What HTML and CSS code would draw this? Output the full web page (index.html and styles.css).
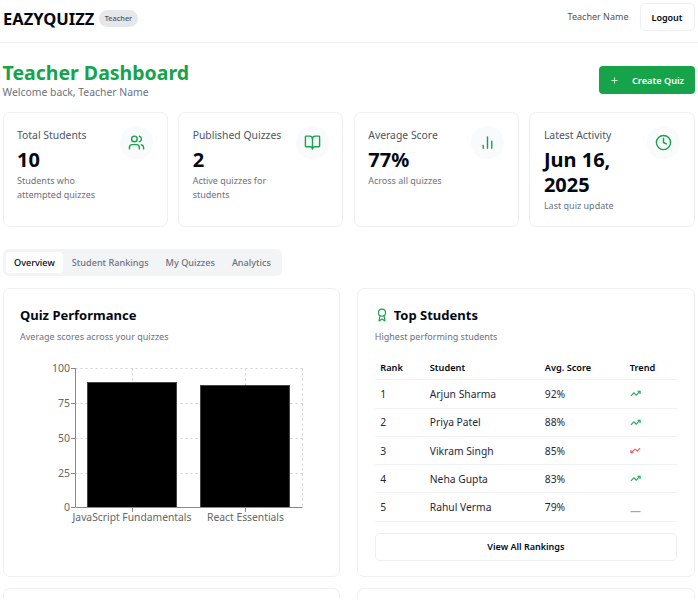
FILE: index.html
```html
<!DOCTYPE html>
<html lang="en">

<head>
    <meta charset="UTF-8">
    <meta name="viewport" content="width=device-width, initial-scale=1.0">
    <title>Teacher Dashboard</title>
    <link rel="stylesheet" href="styles.css">
</head>

<body>
    <header class="topbar">
        <div class="brand">
            <span class="logo">EAZYQUIZZ</span>
            <span class="role-badge">Teacher</span>
        </div>
        <div class="user-box">
            <span class="user-name">Teacher Name</span>
            <button class="btn-outline logout-btn">Logout</button>
        </div>
    </header>

    <main class="content">
        <div class="page-head">
            <div>
                <h1>Teacher Dashboard</h1>
                <p class="welcome">Welcome back, Teacher Name</p>
            </div>
            <button class="create-btn">
                <svg class="icon-plus" viewBox="0 0 24 24"><path d="M5 12h14M12 5v14" /></svg>
                Create Quiz
            </button>
        </div>

        <section class="stats">
            <div class="stat-card">
                <div class="stat-text">
                    <div class="stat-label">Total Students</div>
                    <div class="stat-value">10</div>
                    <div class="stat-note">Students who attempted quizzes</div>
                </div>
                <div class="stat-icon">
                    <svg viewBox="0 0 24 24"><path d="M16 21v-2a4 4 0 0 0-4-4H6a4 4 0 0 0-4 4v2" /><circle cx="9" cy="7" r="4" /><path d="M22 21v-2a4 4 0 0 0-3-3.87" /><path d="M16 3.13a4 4 0 0 1 0 7.75" /></svg>
                </div>
            </div>
            <div class="stat-card">
                <div class="stat-text">
                    <div class="stat-label">Published Quizzes</div>
                    <div class="stat-value">2</div>
                    <div class="stat-note">Active quizzes for students</div>
                </div>
                <div class="stat-icon">
                    <svg viewBox="0 0 24 24"><path d="M12 7v14" /><path d="M3 18a1 1 0 0 1-1-1V4a1 1 0 0 1 1-1h5a4 4 0 0 1 4 4 4 4 0 0 1 4-4h5a1 1 0 0 1 1 1v13a1 1 0 0 1-1 1h-6a3 3 0 0 0-3 3 3 3 0 0 0-3-3z" /></svg>
                </div>
            </div>
            <div class="stat-card">
                <div class="stat-text">
                    <div class="stat-label">Average Score</div>
                    <div class="stat-value">77%</div>
                    <div class="stat-note">Across all quizzes</div>
                </div>
                <div class="stat-icon">
                    <svg viewBox="0 0 24 24"><path d="M12 20V4" /><path d="M18 20v-10" /><path d="M6 20v-4" /></svg>
                </div>
            </div>
            <div class="stat-card">
                <div class="stat-text">
                    <div class="stat-label">Latest Activity</div>
                    <div class="stat-value">Jun 16, 2025</div>
                    <div class="stat-note">Last quiz update</div>
                </div>
                <div class="stat-icon">
                    <svg viewBox="0 0 24 24"><circle cx="12" cy="12" r="10" /><path d="M12 6v6l4 2" /></svg>
                </div>
            </div>
        </section>

        <nav class="tabs">
            <span class="tab active">Overview</span>
            <span class="tab">Student Rankings</span>
            <span class="tab">My Quizzes</span>
            <span class="tab">Analytics</span>
        </nav>

        <section class="panels">
            <div class="panel">
                <h2>Quiz Performance</h2>
                <p class="panel-sub">Average scores across your quizzes</p>
                <svg class="chart" width="300" height="170" viewBox="0 0 300 170">
                    <g class="grid">
                        <path d="M55.5 12.5H282.5M55.5 47.5H282.5M55.5 82.5H282.5M55.5 117.5H282.5" />
                        <path d="M112.5 12.5V151M225.5 12.5V151M282.5 12.5V151" />
                    </g>
                    <rect class="bar" x="67.5" y="26.5" width="89" height="125" />
                    <rect class="bar" x="180.5" y="29.5" width="89" height="122" />
                    <g class="axis">
                        <path d="M55.5 12V151.5H282.5" />
                        <path d="M51 12.5H55M51 47.5H55M51 82.5H55M51 117.5H55M51 151.5H55M112.5 152V156M225.5 152V156" />
                    </g>
                    <g class="y-labels">
                        <text x="50" y="16">100</text>
                        <text x="50" y="51">75</text>
                        <text x="50" y="86">50</text>
                        <text x="50" y="121">25</text>
                        <text x="50" y="155">0</text>
                    </g>
                    <g class="x-labels">
                        <text x="112" y="165">JavaScript Fundamentals</text>
                        <text x="225.5" y="165">React Essentials</text>
                    </g>
                </svg>
            </div>

            <div class="panel">
                <h2 class="title-icon">
                    <svg viewBox="0 0 24 24"><path d="m15.477 12.89 1.515 8.526a.5.5 0 0 1-.81.47l-3.58-2.687a1 1 0 0 0-1.197 0l-3.586 2.686a.5.5 0 0 1-.81-.469l1.514-8.526" /><circle cx="12" cy="8" r="6" /></svg>
                    Top Students
                </h2>
                <p class="panel-sub">Highest performing students</p>
                <table class="rank-table">
                    <thead>
                        <tr>
                            <th class="col-rank">Rank</th>
                            <th class="col-student">Student</th>
                            <th class="col-score">Avg. Score</th>
                            <th>Trend</th>
                        </tr>
                    </thead>
                    <tbody>
                        <tr>
                            <td>1</td>
                            <td>Arjun Sharma</td>
                            <td>92%</td>
                            <td><svg class="trend up" viewBox="0 0 24 24"><path d="M22 7l-8.5 8.5-5-5L2 17" /><path d="M16 7h6v6" /></svg></td>
                        </tr>
                        <tr>
                            <td>2</td>
                            <td>Priya Patel</td>
                            <td>88%</td>
                            <td><svg class="trend up" viewBox="0 0 24 24"><path d="M22 7l-8.5 8.5-5-5L2 17" /><path d="M16 7h6v6" /></svg></td>
                        </tr>
                        <tr>
                            <td>3</td>
                            <td>Vikram Singh</td>
                            <td>85%</td>
                            <td><svg class="trend down" viewBox="0 0 24 24"><path d="M22 7l-6 6-5-4-9 8" /><path d="M2 11v6h6" /></svg></td>
                        </tr>
                        <tr>
                            <td>4</td>
                            <td>Neha Gupta</td>
                            <td>83%</td>
                            <td><svg class="trend up" viewBox="0 0 24 24"><path d="M22 7l-8.5 8.5-5-5L2 17" /><path d="M16 7h6v6" /></svg></td>
                        </tr>
                        <tr>
                            <td>5</td>
                            <td>Rahul Verma</td>
                            <td>79%</td>
                            <td><svg class="trend flat" viewBox="0 0 24 24"><path d="M1 21h22" /></svg></td>
                        </tr>
                    </tbody>
                </table>
                <button class="btn-outline view-all">View All Rankings</button>
            </div>

            <div class="panel panel-next"></div>
            <div class="panel panel-next"></div>
        </section>
    </main>
</body>

</html>
```

FILE: styles.css
```css
/* General */
body {
    margin: 0;
    font-family: "Noto Sans", "Open Sans", sans-serif;
    color: #030712;
    background: #fff;
}

button {
    font-family: inherit;
    cursor: pointer;
}

.btn-outline {
    background: #fff;
    border: 1px solid #eef0f4;
    border-radius: 5px;
    color: #030712;
    font-size: 9px;
    font-weight: 600;
}

/* Top bar */
.topbar {
    display: flex;
    justify-content: space-between;
    height: 43px;
    padding: 3px 3.5px 0 3px;
    box-sizing: border-box;
    border-bottom: 1px solid #f1f2f5;
}

.brand {
    display: flex;
    align-items: center;
    gap: 5px;
    height: 30px;
}

.logo {
    font-size: 16.5px;
    font-weight: 700;
}

.role-badge {
    padding: 2px 5.5px;
    font-size: 7.3px;
    font-weight: 500;
    line-height: 13px;
    color: #4b5563;
    background: #e5e7eb;
    border-radius: 9px;
}

.user-box {
    display: flex;
    align-items: flex-start;
    gap: 11px;
}

.user-name {
    font-size: 9px;
    line-height: 28px;
    color: #4b5563;
}

.logout-btn {
    width: 55px;
    height: 28px;
    padding: 0;
}

/* Page content */
.content {
    padding: 0 3.5px 0 2.5px;
}

.page-head {
    display: flex;
    justify-content: space-between;
    align-items: flex-start;
    height: 69.3px;
    padding-top: 17px;
    box-sizing: border-box;
}

h1 {
    margin: 0;
    font-size: 19.5px;
    font-weight: 700;
    line-height: 25px;
    color: #16a34a;
}

.welcome {
    margin: 0;
    font-size: 10.4px;
    line-height: 15px;
    color: #6b7280;
}

.create-btn {
    display: flex;
    align-items: center;
    gap: 12px;
    width: 95.5px;
    height: 28px;
    margin-top: 6px;
    padding: 0 0 0 10px;
    background: #16a34a;
    border: 0;
    border-radius: 4px;
    color: #fff;
    font-size: 9.2px;
    font-weight: 600;
}

.icon-plus {
    width: 11px;
    height: 11px;
    fill: none;
    stroke: #d3f0dc;
    stroke-width: 2;
}

/* Stat cards */
.stats {
    display: grid;
    grid-template-columns: repeat(4, 1fr);
    gap: 10.5px;
}

.stat-card {
    display: flex;
    justify-content: space-between;
    align-items: flex-start;
    height: 114.5px;
    padding: 13px 13.5px;
    box-sizing: border-box;
    border: 1px solid #eef0f6;
    border-radius: 7px;
}

.stat-label {
    font-size: 10.4px;
    line-height: 18px;
    color: #4b5563;
}

.stat-value {
    margin-top: 3px;
    font-size: 20px;
    font-weight: 700;
    line-height: 25px;
}

.stat-note {
    margin-top: 2px;
    font-size: 9px;
    line-height: 14px;
    color: #6b7280;
}

.stat-icon {
    display: flex;
    align-items: center;
    justify-content: center;
    flex: none;
    width: 33px;
    height: 33px;
    background: #f9fafb;
    border-radius: 50%;
}

.stat-icon svg {
    width: 17px;
    height: 17px;
    fill: none;
    stroke: #16a34a;
    stroke-width: 2;
    stroke-linecap: round;
    stroke-linejoin: round;
}

/* Tabs */
.tabs {
    display: inline-flex;
    margin-top: 22.5px;
    padding: 3px;
    background: #f3f4f6;
    border-radius: 6px;
    vertical-align: top;
}

.tab {
    padding: 0 8.5px;
    font-size: 9.15px;
    font-weight: 500;
    line-height: 21px;
    color: #6b7280;
}

.tab.active {
    color: #030712;
    background: #fff;
    border-radius: 4px;
}

/* Panels */
.panels {
    display: grid;
    grid-template-columns: minmax(0, 1fr) minmax(0, 1fr);
    gap: 11px 17.5px;
    margin-top: 11.5px;
}

.panel {
    height: 289.5px;
    padding: 16px 16.5px;
    box-sizing: border-box;
    border: 1px solid #eef0f6;
    border-radius: 7px;
}

/* only the top edge of the next row shows */
.panel.panel-next {
    height: 11px;
    padding: 0;
    border-bottom: 0;
    border-radius: 7px 7px 0 0;
}

h2 {
    margin: 0;
    font-size: 13px;
    font-weight: 700;
    line-height: 20px;
}

.title-icon {
    display: flex;
    align-items: center;
    gap: 5px;
}

.title-icon svg {
    width: 14px;
    height: 14px;
    fill: none;
    stroke: #16a34a;
    stroke-width: 2;
    stroke-linecap: round;
    stroke-linejoin: round;
}

.panel-sub {
    margin: 2px 0 0;
    font-size: 9px;
    line-height: 20px;
    color: #6b7280;
}

/* Chart */
.chart {
    display: block;
    margin-top: 9.7px;
    font-family: "Noto Sans", "Open Sans", sans-serif;
}

.grid path {
    fill: none;
    stroke: #d0d0d0;
    stroke-dasharray: 2 3;
}

.axis path {
    fill: none;
    stroke: #8a8a8a;
}

.bar {
    fill: #000;
    stroke: #444;
}

.y-labels text {
    font-size: 10.5px;
    fill: #666;
    text-anchor: end;
}

.x-labels text {
    font-size: 10.3px;
    fill: #666;
    text-anchor: middle;
}

/* Rankings table */
.rank-table {
    width: 100%;
    margin-top: 9px;
    border-collapse: collapse;
    table-layout: fixed;
    font-size: 10.3px;
}

.rank-table th {
    height: 23.5px;
    padding: 0 5.5px;
    font-size: 9.2px;
    font-weight: 600;
    text-align: left;
    border-bottom: 1px solid #f1f2f5;
}

.rank-table td {
    height: 27.3px;
    padding: 0 5.5px;
    color: #1f2937;
    border-bottom: 1px solid #f1f2f5;
}

.col-rank {
    width: 38.5px;
}

.col-student {
    width: 104px;
}

.col-score {
    width: 74px;
}

.trend {
    display: block;
    width: 11px;
    height: 11px;
    fill: none;
    stroke-width: 2.5;
}

.trend.up {
    stroke: #22a95a;
}

.trend.down {
    stroke: #ef5a5f;
}

.trend.flat {
    stroke: #9ca3af;
}

.view-all {
    display: block;
    width: 100%;
    height: 28px;
    margin-top: 11px;
}
```
